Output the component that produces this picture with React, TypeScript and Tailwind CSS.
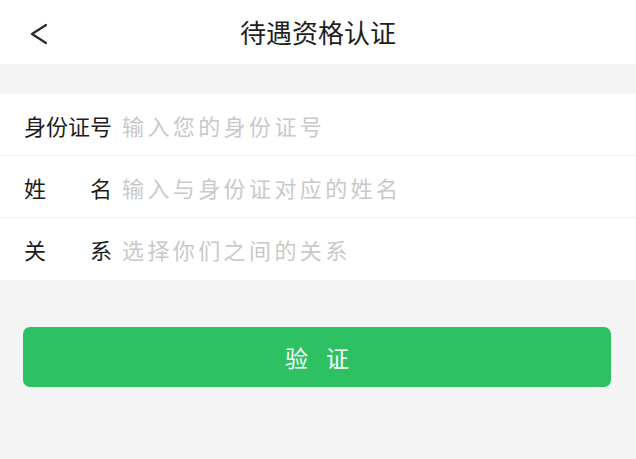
import React from "react";

const font = { fontFamily: '"Noto Sans CJK SC", "Noto Sans", sans-serif' };

function Row({ label, placeholder, spread, last }: { label: string[]; placeholder: string; spread?: boolean; last?: boolean }) {
  return (
    <div className={`flex h-[62px] items-center bg-white pl-[24px] ${last ? "" : "border-b border-[#efefef]"}`}>
      <div className={`flex w-[88px] text-[22px] leading-none text-[#1c1c1c] ${spread ? "justify-between" : ""}`}>
        {label.map((c, i) => (
          <span key={i}>{c}</span>
        ))}
      </div>
      <div className="ml-[10px] text-[22px] leading-none tracking-[3.4px] text-[#c9c9c9]">{placeholder}</div>
    </div>
  );
}

export default function App() {
  return (
    <div style={font} className="flex h-[459px] w-[636px] flex-col bg-[#f4f4f4]">
      <div className="relative flex h-[64px] items-center justify-center bg-white">
        <svg className="absolute left-[28px] top-[22px]" width="22" height="24" viewBox="0 0 22 24">
          <polyline points="18,3 4,12 18,21" fill="none" stroke="#2a2a2a" strokeWidth="2.2" strokeLinecap="round" strokeLinejoin="round" />
        </svg>
        <span className="text-[26px] leading-none text-[#1e1e1e]">待遇资格认证</span>
      </div>
      <div className="mt-[30px] flex flex-col">
        <Row label={["身", "份", "证", "号"]} placeholder="输入您的身份证号" />
        <Row label={["姓", "名"]} spread placeholder="输入与身份证对应的姓名" />
        <Row label={["关", "系"]} spread placeholder="选择你们之间的关系" last />
      </div>
      <div className="px-[23px] pt-[47px]">
        <button className="flex h-[60px] w-[588px] items-center justify-center gap-[18px] rounded-[7px] bg-[#2ec163] text-[23px] leading-none text-white">
          <span>验</span>
          <span>证</span>
        </button>
      </div>
    </div>
  );
}
